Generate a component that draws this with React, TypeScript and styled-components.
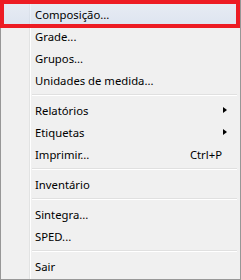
import React from "react";
import styled, { createGlobalStyle } from "styled-components";

const Global = createGlobalStyle`
  html, body { margin: 0; padding: 0; background: #f0f0f0; }
  body { font-family: "Noto Sans", "Open Sans", sans-serif; }
`;

const Menu = styled.div`
  position: relative;
  box-sizing: border-box;
  width: 241px;
  height: 280px;
  border: 1px solid #979797;
  padding: 2px;
  background-color: #f0f0f0;
  background-image: linear-gradient(
    to right,
    transparent 0,
    transparent 28px,
    #e2e3e3 28px,
    #e2e3e3 29px,
    #ffffff 29px,
    #ffffff 30px,
    transparent 30px
  );
`;

const Item = styled.div<{ $active?: boolean }>`
  display: flex;
  align-items: center;
  height: 22px;
  padding: 0 16px 0 32px;
  font-size: 11.3px;
  color: #000;
  white-space: nowrap;
  background: ${(p) =>
    p.$active
      ? "linear-gradient(rgba(220,230,248,0.45), rgba(200,215,240,0.45))"
      : "transparent"};
`;

const Label = styled.span`
  flex: 1;
`;

const Shortcut = styled.span`
  margin-right: 0;
`;

const Arrow = styled.span`
  width: 0;
  height: 0;
  border-top: 3.5px solid transparent;
  border-bottom: 3.5px solid transparent;
  border-left: 4px solid #000;
  margin-right: -5px;
`;

const Separator = styled.div`
  height: 8px;
  margin-left: 29px;
  margin-right: 1px;
  background-image: linear-gradient(
    to bottom,
    transparent 0,
    transparent 3px,
    #e0e0e0 3px,
    #e0e0e0 4px,
    #ffffff 4px,
    #ffffff 5px,
    transparent 5px
  );
`;

const Highlight = styled.div`
  position: absolute;
  left: -1px;
  top: -1px;
  width: 240px;
  height: 28px;
  box-sizing: border-box;
  border: 4px solid #ed1c24;
  pointer-events: none;
`;

type Entry =
  | { kind: "item"; label: string; shortcut?: string; sub?: boolean; active?: boolean }
  | { kind: "sep" };

const entries: Entry[] = [
  { kind: "item", label: "Composição...", active: true },
  { kind: "item", label: "Grade..." },
  { kind: "item", label: "Grupos..." },
  { kind: "item", label: "Unidades de medida..." },
  { kind: "sep" },
  { kind: "item", label: "Relatórios", sub: true },
  { kind: "item", label: "Etiquetas", sub: true },
  { kind: "item", label: "Imprimir...", shortcut: "Ctrl+P" },
  { kind: "sep" },
  { kind: "item", label: "Inventário" },
  { kind: "sep" },
  { kind: "item", label: "Sintegra..." },
  { kind: "item", label: "SPED..." },
  { kind: "sep" },
  { kind: "item", label: "Sair" },
];

export default function App() {
  return (
    <>
      <Global />
      <Menu>
        {entries.map((e, i) =>
          e.kind === "sep" ? (
            <Separator key={i} />
          ) : (
            <Item key={i} $active={e.active}>
              <Label>{e.label}</Label>
              {e.shortcut && <Shortcut>{e.shortcut}</Shortcut>}
              {e.sub && <Arrow />}
            </Item>
          )
        )}
        <Highlight />
      </Menu>
    </>
  );
}
